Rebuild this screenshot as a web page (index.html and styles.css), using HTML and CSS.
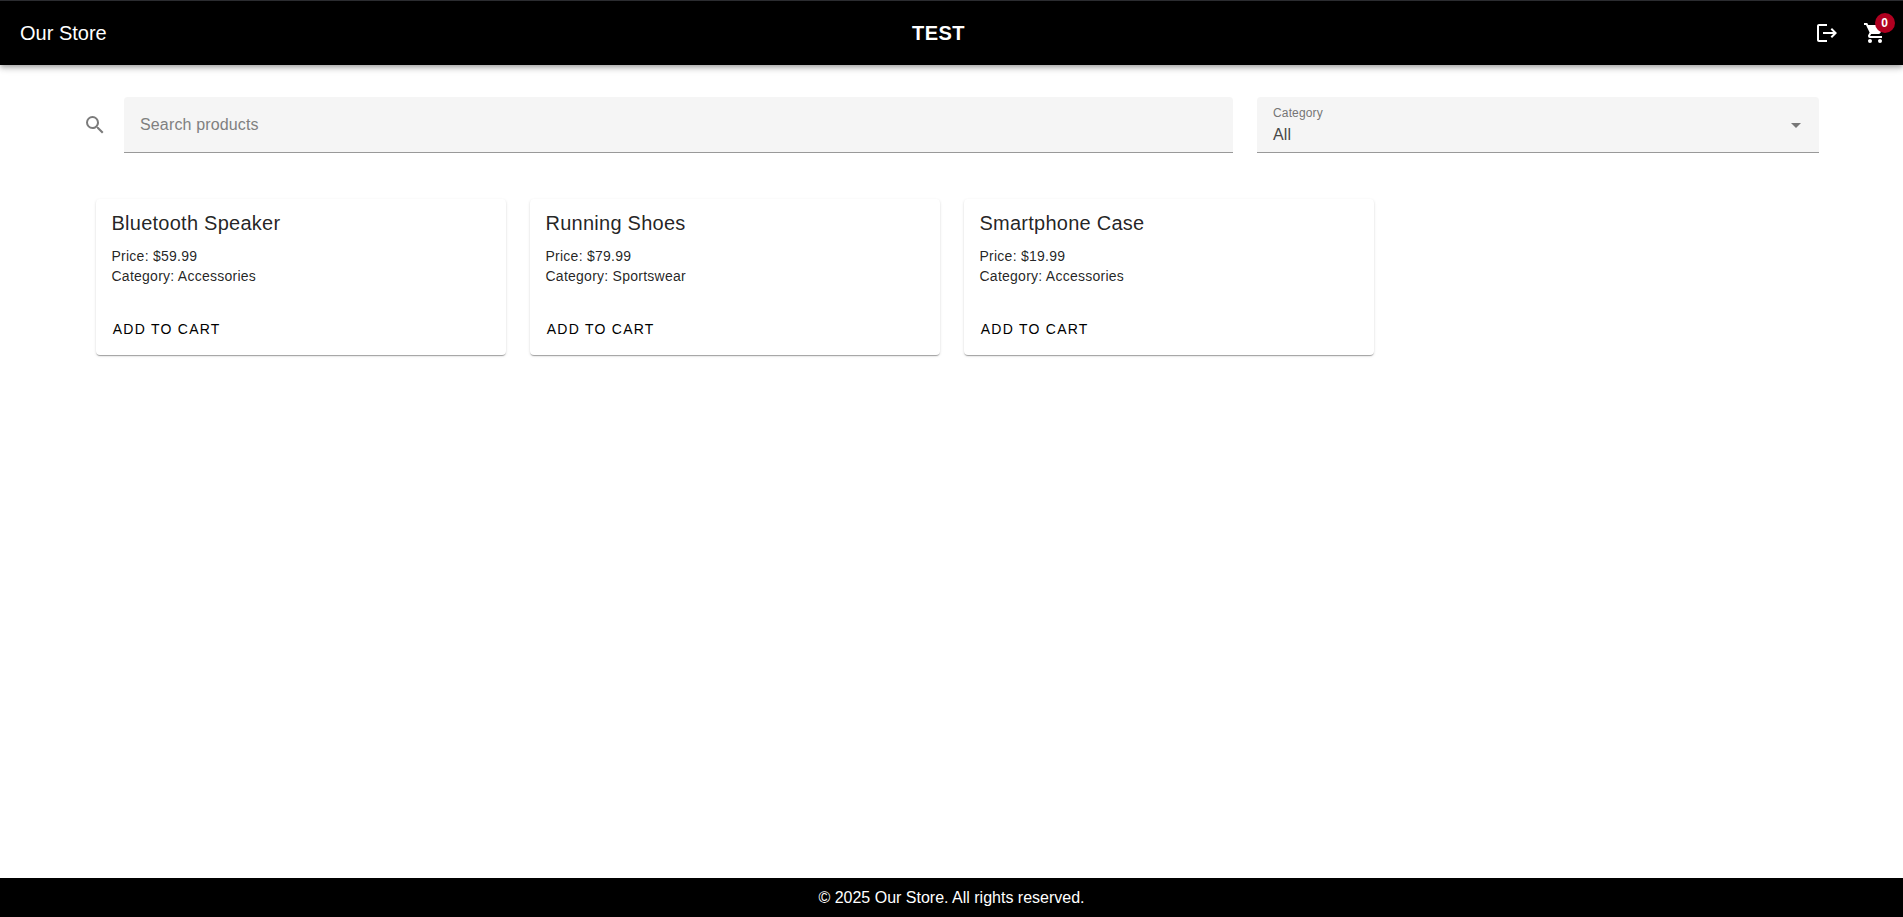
FILE: index.html
```html
<!DOCTYPE html>
<html lang="en">
<head>
<meta charset="utf-8">
<title>Our Store</title>
<link rel="stylesheet" href="styles.css">
</head>
<body>
<header class="app-bar">
  <div class="brand">Our Store</div>
  <div class="app-title">TEST</div>
  <div class="actions">
    <button class="icon-button" aria-label="Log out"><svg class="icon" viewBox="0 0 24 24"><path d="M17 7L15.59 8.41L18.17 11H8V13H18.17L15.59 15.58L17 17L22 12M4 5H12V3H4C2.9 3 2 3.9 2 5V19C2 20.1 2.9 21 4 21H12V19H4V5Z"/></svg></button>
    <button class="icon-button" aria-label="Cart"><svg class="icon" viewBox="0 0 24 24"><path d="M17,18C15.89,18 15,18.89 15,20A2,2 0 0,0 17,22A2,2 0 0,0 19,20C19,18.89 18.1,18 17,18M1,2V4H3L6.6,11.59L5.24,14.04C5.09,14.32 5,14.65 5,15A2,2 0 0,0 7,17H19V15H7.42A0.25,0.25 0 0,1 7.17,14.75C7.17,14.7 7.18,14.66 7.2,14.63L8.1,13H15.55C16.3,13 16.96,12.58 17.3,11.97L20.88,5.5C20.95,5.34 21,5.17 21,5A1,1 0 0,0 20,4H5.21L4.27,2M7,18C5.89,18 5,18.89 5,20A2,2 0 0,0 7,22A2,2 0 0,0 9,20C9,18.89 8.1,18 7,18Z"/></svg><span class="badge">0</span></button>
  </div>
</header>
<main class="content">
  <div class="filters">
    <svg class="icon search-icon" viewBox="0 0 24 24"><path d="M9.5,3A6.5,6.5 0 0,1 16,9.5C16,11.11 15.41,12.59 14.44,13.73L14.71,14H15.5L20.5,19L19,20.5L14,15.5V14.71L13.73,14.44C12.59,15.41 11.11,16 9.5,16A6.5,6.5 0 0,1 3,9.5A6.5,6.5 0 0,1 9.5,3M9.5,5C7,5 5,7 5,9.5C5,12 7,14 9.5,14C12,14 14,12 14,9.5C14,7 12,5 9.5,5Z"/></svg>
    <div class="field search"><span class="placeholder">Search products</span></div>
    <div class="field select">
      <div class="select-text"><span class="label">Category</span><span class="value">All</span></div>
      <svg class="icon caret" viewBox="0 0 24 24"><path d="M7,10L12,15L17,10H7Z"/></svg>
    </div>
  </div>
  <div class="products">
    <article class="card">
      <h2 class="card-title">Bluetooth Speaker</h2>
      <div class="card-text"><div>Price: $59.99</div><div>Category: Accessories</div></div>
      <button class="add">Add to Cart</button>
    </article>
    <article class="card">
      <h2 class="card-title">Running Shoes</h2>
      <div class="card-text"><div>Price: $79.99</div><div>Category: Sportswear</div></div>
      <button class="add">Add to Cart</button>
    </article>
    <article class="card">
      <h2 class="card-title">Smartphone Case</h2>
      <div class="card-text"><div>Price: $19.99</div><div>Category: Accessories</div></div>
      <button class="add">Add to Cart</button>
    </article>
  </div>
</main>
<footer class="footer">© 2025 Our Store. All rights reserved.</footer>
</body>
</html>
```
FILE: styles.css
```css
* { box-sizing: border-box; }
body {
  margin: 0;
  height: 917px;
  display: flex;
  flex-direction: column;
  font: 16px/24px "Liberation Sans", Arial, sans-serif;
  color: rgba(0, 0, 0, .87);
  background: #fff;
  overflow: hidden;
}
button { border: 0; padding: 0; background: none; font: inherit; color: inherit; }
.icon { width: 24px; height: 24px; fill: currentColor; display: block; flex: none; }
.app-bar {
  height: 65px;
  flex: none;
  display: flex;
  align-items: center;
  justify-content: space-between;
  border-top: 1px solid #2b2c30;
  padding-left: 20px;
  background: #000;
  color: #fff;
  font-size: 20px;
  line-height: 30px;
  box-shadow: 0 2px 4px -1px rgba(0,0,0,.2), 0 4px 5px 0 rgba(0,0,0,.14), 0 1px 10px 0 rgba(0,0,0,.12);
}
.brand { width: 96px; }
.app-title { font-weight: 700; letter-spacing: .45px; margin-right: 42px; }
.actions { display: flex; padding-right: 4px; }
.icon-button { position: relative; width: 48px; height: 48px; display: grid; place-items: center; }
.badge {
  position: absolute;
  left: 24px;
  top: 4px;
  width: 20px;
  height: 20px;
  border-radius: 10px;
  background: #b00020;
  font: 700 12px/20px "Liberation Sans", Arial, sans-serif;
  text-align: center;
  padding-right: 1px;
}
.content { flex: 1; padding: 32px 84px 0; }
.filters { display: flex; align-items: center; }
.search-icon { color: #7b7b7b; margin: 0 17px 0 -1px; }
.field {
  height: 56px;
  background: #f5f5f5;
  border-bottom: 1px solid #999;
  border-radius: 4px 4px 0 0;
  padding: 0 16px;
  display: flex;
  align-items: center;
  letter-spacing: .15px;
}
.search { width: 1109px; margin-right: 24px; }
.placeholder { color: #808080; }
.select { width: 562px; justify-content: space-between; padding-right: 11.5px; }
.select-text { display: flex; flex-direction: column; padding-top: 1px; }
.label { font-size: 12px; line-height: 18px; color: #767676; }
.value { line-height: 25px; color: #484848; }
.caret { color: #777; }
.products { display: flex; gap: 24px; padding: 46px 12px 0; }
.card {
  width: 410px;
  height: 156px;
  border-radius: 4px;
  display: flex;
  flex-direction: column;
  align-items: flex-start;
  background: #fff;
  box-shadow: 0 2px 1px -1px rgba(0,0,0,.2), 0 1px 1px 0 rgba(0,0,0,.14), 0 1px 3px 0 rgba(0,0,0,.12);
}
.card-title { margin: 0; padding: 8px 15.5px 7px; font-size: 20px; font-weight: 400; line-height: 32px; letter-spacing: .25px; }
.card-text { padding: 0 15.5px 17px; font-size: 14px; line-height: 20px; letter-spacing: .25px; }
.add { margin: 8px 0 0 8.75px; height: 36px; padding: 0 8px; font-size: 14px; letter-spacing: 1.25px; text-transform: uppercase; color: #000; }
.footer { height: 39px; flex: none; background: #000; color: #fff; text-align: center; line-height: 39px; }
```
